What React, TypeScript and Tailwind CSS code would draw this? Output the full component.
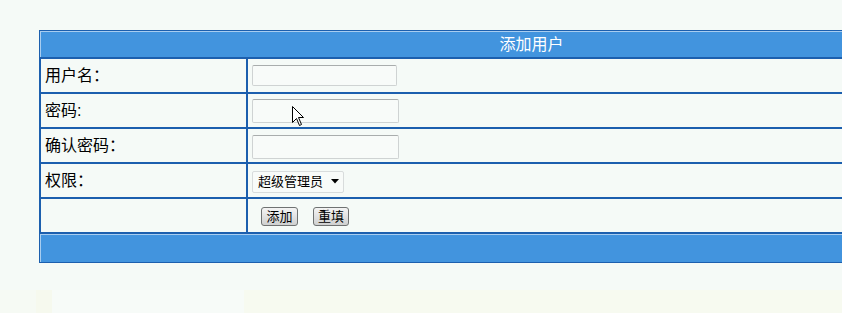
import React from "react";

const font = { fontFamily: '"Liberation Sans", "Noto Sans CJK SC", sans-serif' };

function Row({ label, children }: { label: string; children?: React.ReactNode }) {
  return (
    <div className="flex h-[33px] gap-[2px]">
      <div className="w-[205px] shrink-0 bg-[#f5faf7] flex items-center pl-[4px] text-[16px] text-black leading-none">
        {label}
      </div>
      <div className="flex-1 bg-[#f5faf7] flex items-center pl-[4px]">{children}</div>
    </div>
  );
}

export default function App() {
  return (
    <div className="relative w-[842px] h-[313px] overflow-hidden bg-[#f5faf7]" style={font}>
      <div className="pt-[30px] pl-[39px]">
        <div className="w-[984px] bg-[#1c5fae] p-px">
          <div className="h-[26px] bg-[#4294de] border-t border-l border-[#a8cdf0] flex items-center justify-center text-white text-[16px] leading-none">
            添加用户
          </div>
          <div className="flex flex-col gap-[2px] pt-[2px] pb-[2px] pl-px">
            <Row label="用户名：">
              <div className="w-[145px] h-[21px] border border-[#cfd3d3] border-t-[#a9adad] rounded-[2px] bg-[#f8fbf9]" />
            </Row>
            <Row label="密码:">
              <div className="w-[147px] h-[24px] border border-[#cfd3d3] border-t-[#a9adad] rounded-[2px] bg-[#f8fbf9]" />
            </Row>
            <Row label="确认密码：">
              <div className="w-[147px] h-[24px] mt-[2px] border border-[#cfd3d3] border-t-[#a9adad] rounded-[2px] bg-[#f8fbf9]" />
            </Row>
            <Row label="权限：">
              <div className="mt-[2px] w-[92px] h-[22px] border border-[#d8dcdc] rounded-[2px] bg-[#f8fbf9] flex items-center pl-[5px] text-[13px] text-black leading-none">
                <span>超级管理员</span>
                <svg width="8" height="5" viewBox="0 0 8 5" className="ml-[8px]">
                  <polygon points="0,0 8,0 4,4.5" fill="#000" />
                </svg>
              </div>
            </Row>
            <Row label="">
              <div className="flex gap-[15px] pl-[9px] mt-[2px]">
                <button className="w-[37px] h-[19px] border border-[#6f7272] rounded-[3px] bg-gradient-to-b from-[#f4f4f4] to-[#cfd0d0] text-[13px] text-black leading-none flex items-center justify-center">
                  添加
                </button>
                <button className="w-[36px] h-[19px] border border-[#6f7272] rounded-[3px] bg-gradient-to-b from-[#f4f4f4] to-[#cfd0d0] text-[13px] text-black leading-none flex items-center justify-center">
                  重填
                </button>
              </div>
            </Row>
          </div>
          <div className="h-[28px] bg-[#4294de] border-t border-l border-[#a8cdf0]" />
        </div>
      </div>
      <div className="absolute left-0 right-0 top-[290px] bottom-0 flex">
        <div className="w-[36px] bg-[#f6faf4]" />
        <div className="w-[16px] bg-[#f6f9ee]" />
        <div className="w-[192px] bg-[#f7fbf8]" />
        <div className="flex-1 bg-[#f7faf0]" />
      </div>
      <svg className="absolute left-[292px] top-[106px]" width="13" height="21" viewBox="0 0 13 21">
        <polygon
          points="0.5,0.5 0.5,16.5 4.5,12.5 7.5,19.5 9.5,18.5 6.5,11.5 11.5,11.5"
          fill="#fff"
          stroke="#000"
          strokeWidth="1"
        />
      </svg>
    </div>
  );
}
